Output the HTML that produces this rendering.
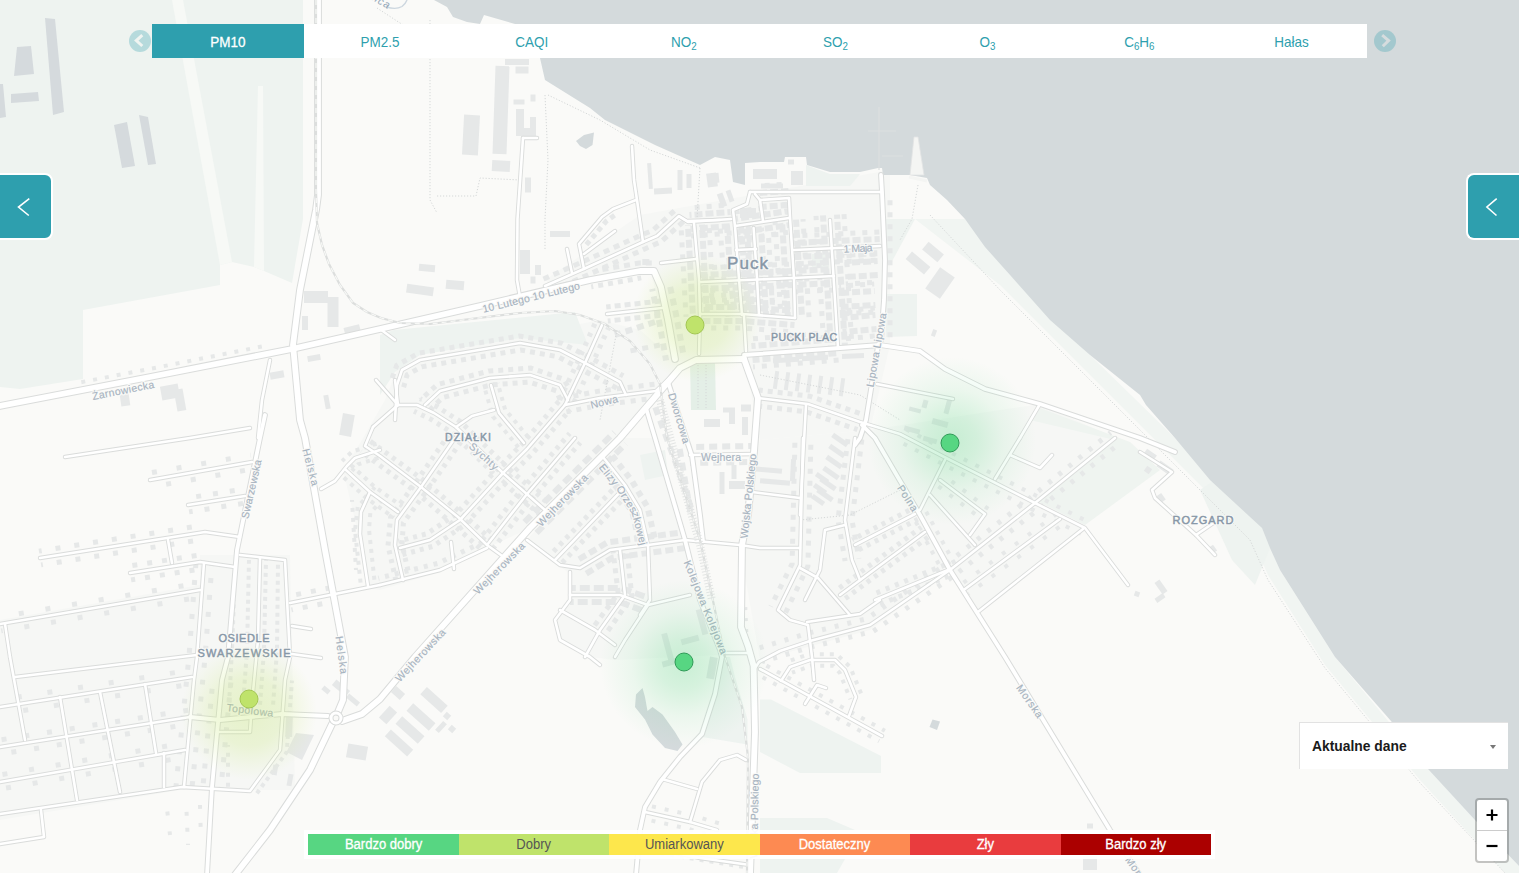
<!DOCTYPE html>
<html lang="pl"><head><meta charset="utf-8"><title>Mapa jakości powietrza - Puck</title>
<style>
html,body{margin:0;padding:0;background:#fff}
body{width:1519px;height:875px;overflow:hidden;position:relative;font-family:"Liberation Sans",sans-serif}
#map{position:absolute;left:0;top:0;width:1519px;height:873px;overflow:hidden;background:#fafaf8}
.tabs{position:absolute;left:152px;top:24px;width:1215px;height:34px;background:#fff;display:flex}
.tab{flex:1 1 0;height:34px;line-height:34px;text-align:center;color:#2e9fae;font-size:14.5px}
.tab span{display:inline-block;transform:scaleX(.93);position:relative;top:.5px}
.tab.on{background:#2e9fae;color:#fff;-webkit-text-stroke:.3px #fff}
.tab sub{font-size:10.5px;vertical-align:baseline;position:relative;top:3px;line-height:0}
.arr{position:absolute;top:30.1px;width:22px;height:22px;border-radius:50%;background:rgba(46,159,174,.29)}
.side{position:absolute;top:173px;width:51px;height:63px;background:#2e9fae;border:2px solid #fff}
.side.l{left:-2px;border-radius:0 8px 8px 0}
.side.r{left:1466px;border-radius:8px 0 0 8px;width:53px;border-right:none}
.legend{position:absolute;left:308px;top:834px;width:903px;height:21px;display:flex;box-shadow:0 0 0 4px rgba(255,255,255,.92)}
.legend div{flex:1 1 0;text-align:center;font-size:14px;line-height:21px;height:21px}
.legend span{display:inline-block;transform:scaleX(.93)}
.sel{position:absolute;left:1299px;top:722px;width:208px;height:46px;background:#fff;border-left:1px solid #e2e2e2;border-top:1px solid #e2e2e2}
.sel b{position:absolute;left:12px;top:0;line-height:47px;font-size:14.5px;color:#1a1a1a;transform:scaleX(.955);transform-origin:left center;white-space:nowrap}
.sel i{position:absolute;left:190px;top:22px;width:0;height:0;border-left:3.5px solid transparent;border-right:3.5px solid transparent;border-top:4px solid #777}
.zoom{position:absolute;left:1475px;top:798px;width:30px;height:61px;border:2px solid rgba(0,0,0,.22);border-radius:4px;background:#fff;background-clip:padding-box}
.zoom div{height:30px;position:relative}
.zoom div+div{border-top:1px solid #ccc}
</style></head><body>
<div id="map">
<svg width="1519" height="873" viewBox="0 0 1519 873" style="display:block">
<defs>
<radialGradient id="hg"><stop offset="0" stop-color="#57d682" stop-opacity=".3"/><stop offset=".3" stop-color="#57d682" stop-opacity=".22"/><stop offset=".62" stop-color="#57d682" stop-opacity=".09"/><stop offset="1" stop-color="#57d682" stop-opacity="0"/></radialGradient>
<radialGradient id="hy"><stop offset="0" stop-color="#c3e56e" stop-opacity=".32"/><stop offset=".5" stop-color="#c6e774" stop-opacity=".25"/><stop offset=".8" stop-color="#cbe97e" stop-opacity=".1"/><stop offset="1" stop-color="#d0ec8a" stop-opacity="0"/></radialGradient>
<path id="eo" d="M599,462 L621,489 L636,513 L644,545 L646,580"/>
</defs>
<rect width="1519" height="873" fill="#fafaf8"/>
<path d="M385,400 L400,362 L520,336 L600,320 L640,330 L680,365 L620,438 L530,528 L487,548 L440,572 L380,590 L368,588 L355,520 L343,470 L362,440Z" fill="#f6f7f5"/>
<path d="M640,215 L890,170 L890,345 L870,430 L760,440 L745,360 L675,362 L650,270 L560,290 L545,280Z" fill="#f6f7f5"/>
<path d="M760,440 L870,430 L1040,404 L1115,438 L1035,503 L1085,528 L978,612 L950,570 L870,630 L760,660 L740,548Z" fill="#f6f7f5"/>
<path d="M527,540 L620,438 L655,438 L700,600 L720,655 L615,660 L590,657 L560,640 L553,620 L568,600 L568,572 L558,565Z" fill="#f6f7f5"/>
<path d="M200,555 L290,555 L295,790 L180,790 L0,820 L0,620 L200,585Z" fill="#f6f7f5"/>
<path d="M0,0 L303,0 L303,219 L292,283 L264,271 L254,267 L232,262 L220,265 L220,285 L83,310 L83,379 L20,389 L0,387Z" fill="#eef3f0"/>
<path d="M722.5,657 L712.5,707 L702.5,737 L747.5,744.5 L747.5,719.5 L735,677 L730,657Z" fill="#eef3f0"/>
<path d="M760,699.5 L771,699.5 L881,756 L881,773 L800,773 L760,752Z" fill="#eef3f0"/>
<path d="M760,859 L845,859 L837,873 L760,873Z" fill="#eef3f0"/>
<path d="M827,818 L855,830 L760,830 L760,818Z" fill="#eef3f0"/>
<path d="M172,0 L183,0 L232,262 L220,265Z" fill="#f7f9f6"/>
<path d="M258,86 L263,86 L264,271 L254,267Z" fill="#f7f9f6"/>
<path d="M690,362 L715,361 L716,410 L691,410Z" fill="#e4efe7"/>
<path d="M886,294 L917,294 L917,336 L886,337Z" fill="#eef3f0"/>
<path d="M885,219 L915,219 L890,265 L885,262Z" fill="#eef3f0"/>
<path d="M812,254 L829,254 L829,268 L812,268Z" fill="#edf2ee"/>
<path d="M394,330 L575,312 L588,345 L520,338 L420,355 L395,372 L380,395 L380,335Z" fill="#eef3f0"/>
<path d="M640,455 L665,450 L668,475 L645,480Z" fill="#eef3f0"/>
<path d="M1040,408 L1130,442 L1160,470 L1085,525 L1035,500 L1115,440 L1030,420Z" fill="#eff4f0"/>
<path d="M806,165 L830,174 L860,174 L850,186 L806,186Z" fill="#eef3f0"/>
<path d="M915,219 L965,219 L1010,275 L1090,355 L1175,438 L1262,528 L1280,570 L1335,657 L1428,769 L1519,866 L1519,873 L1505,873 L1420,780 L1325,665 L1268,575 L1250,535 L1165,450 L1080,365 L1000,285Z" fill="#f1f5f2"/>
<path d="M1200,490 L1215,480 L1262,528 L1270,548 L1255,585 L1232,560Z" fill="#eef3f0"/>
<path d="M434,0 L447,7 L453,17 L467,22 L480,24 L484,15 L515,24 L540,58 L545,80 L590,108 L605,120 L655,145 L700,165 L715,157 L730,160 L733,182 L745,185 L745,163 L760,162 L784,162 L785,157 L806,157 L807,165 L830,172 L860,172 L878,168 L882,168 L883,175 L910,175 L927,178 L930,185 L947,200 L965,219 L985,247 L1010,275 L1050,320 L1090,355 L1140,395 L1146,405 L1175,438 L1210,480 L1262,528 L1270,548 L1280,570 L1335,657 L1391,721 L1428,769 L1475,820 L1519,866 L1519,0Z" fill="#d4dadc"/>
<path d="M576,141 L584,135 L594,132.5 L592.5,145 L586,149 L580,146Z" fill="#d4dadc"/>
<path d="M642.5,688 L645,697 L647.5,711 L652.5,707 L662.5,714.5 L675,732 L682.5,744.5 L677.5,751 L665,748 L652.5,734.5 L645,719.5 L635,707 L636,694.5Z" fill="#d4dadc"/>
<path d="M932.5,719.5 L940,721.5 L937,730 L929.5,727Z" fill="#d4dadc"/>
<path d="M386.5,7 Q396,10 402,6.5 Q406,3 407,0" fill="none" stroke="#cdd7df" stroke-width="1.4"/>
<text x="387.5" y="9" font-family="Liberation Sans, sans-serif" font-style="italic" font-size="10.5" fill="#8fa3b5" text-anchor="end" textLength="44" lengthAdjust="spacing" transform="rotate(30 387.5 9)">Płutnica</text>
<path d="M914,137 L918,137 L924,175 L910,175Z" fill="#f4f5f3" stroke="#e3e5e4" stroke-width=".8"/>
<path d="M909,177 L927,181" stroke="#f4f5f3" stroke-width="3"/>
<path d="M879,107 V170 M868,131 H896 M882,156 H903" stroke="#dcdfe0" stroke-width="1.2" fill="none"/>
<path d="M45,18 L55,19 L64,112 L53,115Z" fill="#d5dadd"/>
<path d="M17,47 L31,46 L34,74 L14,76Z" fill="#d5dadd"/>
<path d="M11,94 L38,92 L39,101 L11,103Z" fill="#d5dadd"/>
<path d="M0,84 L3,84 L6,117 L0,118Z" fill="#d5dadd"/>
<path d="M114,125 L127,122 L135,166 L122,168Z" fill="#d5dadd"/>
<path d="M139,115 L148,117 L156,164 L148,165Z" fill="#d5dadd"/>
<g fill="#e6e8e8"><path d="M495.5,65.8 L509.5,66.3 L506.5,154.2 L492.5,153.7Z"/><path d="M505,59 L529,59 L529,65 L505,65Z"/><path d="M515.5,66.5 L528.5,66.5 L528.5,73.5 L515.5,73.5Z"/><path d="M464.1,114.6 L480,115.4 L477.9,155.4 L462,154.6Z"/><path d="M513.5,99.5 L524.5,99.5 L524.5,104.5 L513.5,104.5Z"/><path d="M530.5,94.5 L535.5,94.5 L535.5,101.5 L530.5,101.5Z"/><path d="M516,109 L524,109 L524,135 L516,135Z"/><path d="M530,117 L536,117 L536,139 L530,139Z"/><path d="M516,128 L536,128 L536,136 L516,136Z"/><path d="M492.3,160 L510.3,161 L509.7,172 L491.7,171Z"/><path d="M525,177.5 L531,177.5 L531,192.5 L525,192.5Z"/><path d="M647.1,163.2 L651.1,162.9 L652.9,188.8 L648.9,189.1Z"/><path d="M677.5,170 L682.5,170 L682.5,190 L677.5,190Z"/><path d="M686.5,174 L691.5,174 L691.5,188 L686.5,188Z"/><path d="M653.9,188.5 L671.8,187.5 L672.1,193.5 L654.2,194.5Z"/><path d="M706.1,173.8 L716,172.4 L717.9,186.2 L708,187.6Z"/><path d="M304,291 L328,291 L328,303 L304,303Z"/><path d="M327.5,297 L338.5,297 L338.5,327 L327.5,327Z"/><path d="M302,316 L308,316 L308,330 L302,330Z"/><path d="M343.5,328 L359,324.2 L360.5,330 L345,333.8Z"/><path d="M307.1,356.2 L319.9,353.9 L320.9,359.8 L308.1,362.1Z"/><path d="M323.3,395.5 L328.2,394.7 L330.7,408.5 L325.8,409.3Z"/><path d="M343,413.1 L354.8,415.2 L351,436.9 L339.2,434.8Z"/><path d="M269.5,372.8 L283.3,370.3 L284.5,377.2 L270.7,379.7Z"/><path d="M119.7,394.7 L128.6,393.4 L130.3,405.3 L121.4,406.6Z"/><path d="M159.9,386.7 L177.6,383.5 L180.1,397.3 L162.4,400.5Z"/><path d="M173.7,389.9 L182.5,388.4 L186.3,410.1 L177.5,411.6Z"/><path d="M550,231 L570,231 L570,237 L550,237Z"/><path d="M520,250 L530,250 L530,274 L520,274Z"/><path d="M419.3,263.8 L435.3,265.2 L434.7,272.2 L418.7,270.8Z"/><path d="M407.3,283.7 L434,287.4 L432.7,296.3 L406,292.6Z"/><path d="M446.4,279.7 L464.4,281.3 L463.6,290.3 L445.6,288.7Z"/><path d="M535,265 L541,265 L541,275 L535,275Z"/><path d="M530.5,276.5 L535.5,276.5 L535.5,283.5 L530.5,283.5Z"/><path d="M426.9,686.9 L447.7,705.7 L441.1,713.1 L420.3,694.3Z"/><path d="M413.2,703.2 L435.5,723.3 L428.8,730.8 L406.5,710.7Z"/><path d="M402.2,716.2 L424.5,736.3 L417.8,743.8 L395.5,723.7Z"/><path d="M390.9,729.6 L413.2,749.7 L407.1,756.4 L384.8,736.3Z"/><path d="M389.6,705.7 L397.1,712.4 L386.4,724.3 L378.9,717.6Z"/><path d="M396.2,686 L405.1,694 L399.8,700 L390.9,692Z"/><path d="M446.8,711.8 L451.2,715.8 L447.2,720.2 L442.8,716.2Z"/><path d="M451.8,724.8 L456.2,728.8 L452.2,733.2 L447.8,729.2Z"/><path d="M443.2,720.9 L446.9,724.2 L438.8,733.1 L435.1,729.8Z"/><path d="M324.5,685.5 L330.7,690.7 L327.5,694.5 L321.3,689.3Z"/><path d="M336.4,679.5 L350.1,691.1 L345.6,696.5 L331.9,684.9Z"/><path d="M348.4,743.4 L368.1,746.8 L365.6,760.6 L345.9,757.2Z"/><path d="M296,733 L314,735 L302,760 L286.5,752Z"/><path d="M285.9,716.9 L292.8,717.1 L292.1,737.1 L285.2,736.9Z"/><path d="M349.2,693.6 L360,702.6 L356.8,706.4 L346,697.4Z"/><path d="M288.6,773.7 L293.5,774.5 L291.4,786.3 L286.5,785.5Z"/><path d="M273.4,764.6 L278.3,765.5 L276.6,775.4 L271.7,774.5Z"/><path d="M1087,823.5 L1093,823.5 L1093,828.5 L1087,828.5Z"/><path d="M1083,856 L1097,856 L1097,870 L1083,870Z"/><path d="M928.6,241.7 L943.9,254.6 L937.4,262.3 L922.1,249.4Z"/><path d="M912,251.5 L930.4,266.9 L924,274.5 L905.6,259.1Z"/><path d="M940.1,267.2 L954.8,277.5 L939.9,298.8 L925.2,288.5Z"/><path d="M933.3,329 L937.1,330.4 L934.7,337 L930.9,335.6Z"/><path d="M1154.5,583 L1159.4,579.5 L1167.5,591 L1162.6,594.5Z"/><path d="M1154.5,598.8 L1162.7,593.1 L1165.5,597.2 L1157.3,602.9Z"/><path d="M1135.5,590.8 L1140.2,592.5 L1138.5,597.2 L1133.8,595.5Z"/><path d="M1147.1,448.7 L1156.9,455.6 L1152.9,461.3 L1143.1,454.4Z"/><path d="M1160.5,460.5 L1173.6,469.7 L1169.5,475.5 L1156.4,466.3Z"/><path d="M1147.3,465.8 L1152.2,469.3 L1148.7,474.2 L1143.8,470.7Z"/><path d="M1156.2,496.4 L1161.2,493 L1165.8,499.6 L1160.8,503Z"/><path d="M1208.9,547.6 L1213,544.7 L1217.1,550.4 L1213,553.3Z"/><path d="M1092,650 L1092,650 L1092,650 L1092,650Z"/><path d="M753,169 L777,169 L777,179 L753,179Z"/><path d="M788,159.5 L794,159.5 L794,164.5 L788,164.5Z"/><path d="M791,171 L803,171 L803,185 L791,185Z"/><path d="M761,183.5 L783,183.5 L783,188.5 L761,188.5Z"/><path d="M710.6,173.4 L718.5,172.7 L719.4,182.6 L711.5,183.3Z"/><path d="M716.8,194.4 L722.4,192.4 L727.2,205.6 L721.6,207.6Z"/><path d="M725.6,191.2 L730.3,189.5 L734.4,200.8 L729.7,202.5Z"/><path d="M740,208 L756,208 L756,218 L740,218Z"/><path d="M909.7,406.5 L921.3,409.6 L920.3,413.5 L908.7,410.4Z"/><path d="M923.6,399.5 L928.5,400.8 L926.4,408.5 L921.5,407.2Z"/><path d="M943.5,413.1 L947.7,397.6 L952.5,398.9 L948.3,414.4Z"/><path d="M933,418 L948.5,422.2 L947,428 L931.5,423.8Z"/><path d="M923.9,435.8 L937.4,439.4 L936.1,444.2 L922.6,440.6Z"/><path d="M904.9,425.5 L920.4,429.7 L919.1,434.5 L903.6,430.3Z"/><path d="M680.5,639.4 L697.9,634.8 L699.5,640.6 L682.1,645.2Z"/><path d="M695.7,610.2 L701.5,608.7 L708.3,633.8 L702.5,635.3Z"/><path d="M661.2,634.3 L667,632.7 L674.8,661.7 L669,663.3Z"/><path d="M661.6,661.7 L680.9,656.5 L682.4,662.3 L663.1,667.5Z"/><path d="M710,656.5 L717.8,657.9 L714,679.5 L706.2,678.1Z"/><path d="M754.3,466.3 L782.2,468.7 L781.7,473.7 L753.8,471.3Z"/><path d="M760.3,478.2 L790.2,480.8 L789.7,485.8 L759.8,483.2Z"/><path d="M791.1,458.9 L796.1,459.1 L794.9,481.1 L789.9,480.9Z"/><path d="M729,412 L735,412 L735,424 L729,424Z"/><path d="M742,417 L748,417 L748,435 L742,435Z"/><path d="M729,481 L745,481 L745,489 L729,489Z"/><path d="M719.5,472 L724.5,472 L724.5,494 L719.5,494Z"/><path d="M731.5,465 L736.5,465 L736.5,479 L731.5,479Z"/><path d="M704,419 L720,419 L720,427 L704,427Z"/><path d="M723,407.5 L735,407.5 L735,412.5 L723,412.5Z"/><path d="M741,404.5 L751,404.5 L751,411.5 L741,411.5Z"/><path d="M772.9,358.2 L798.9,356.8 L799.1,361.8 L773.1,363.2Z"/><path d="M801.9,356.2 L827.9,354.8 L828.1,359.8 L802.1,361.2Z"/><path d="M841.9,354.1 L863.9,352.9 L864.1,357.9 L842.1,359.1Z"/><path d="M775.3,370.8 L779.2,371.4 L776.7,389.2 L772.8,388.6Z"/><path d="M786.3,372 L790.2,372.6 L787.7,390.4 L783.8,389.8Z"/><path d="M797.3,373.2 L801.2,373.8 L798.7,391.6 L794.8,391Z"/><path d="M808.3,374.4 L812.2,375 L809.7,392.8 L805.8,392.2Z"/><path d="M819.3,375.6 L823.2,376.2 L820.7,394 L816.8,393.4Z"/><path d="M830.3,376.8 L834.2,377.4 L831.7,395.2 L827.8,394.6Z"/><path d="M841.3,378 L845.2,378.6 L842.7,396.4 L838.8,395.8Z"/><path d="M834.1,432.8 L848.8,443.1 L845.9,447.2 L831.2,436.9Z"/><path d="M831.1,443.8 L845.8,454.1 L842.9,458.2 L828.2,447.9Z"/><path d="M828.1,454.8 L842.8,465.1 L839.9,469.2 L825.2,458.9Z"/><path d="M825.1,465.8 L839.8,476.1 L836.9,480.2 L822.2,469.9Z"/><path d="M822.1,476.8 L836.8,487.1 L833.9,491.2 L819.2,480.9Z"/><path d="M819.1,487.8 L833.8,498.1 L830.9,502.2 L816.2,491.9Z"/><path d="M817.7,471.9 L829.2,480 L826.3,484.1 L814.8,476Z"/><path d="M815.7,482.9 L827.2,491 L824.3,495.1 L812.8,487Z"/><path d="M813.7,493.9 L825.2,502 L822.3,506.1 L810.8,498Z"/></g>
<g fill="none" stroke="#e6e8e8"><path d="M607.8,321 L662.8,315" stroke-width="5" stroke-dasharray="6 4" stroke-dashoffset="3.2"/><path d="M606.2,307 L661.2,301" stroke-width="5" stroke-dasharray="6 4" stroke-dashoffset="1.5"/><path d="M598.6,270.1 L639,263.1 L654,263" stroke-width="5" stroke-dasharray="6 5" stroke-dashoffset="7.2"/><path d="M615,335 L655,322" stroke-width="6" stroke-dasharray="7 5" stroke-dashoffset="0.9"/><path d="M625,352 L660,345" stroke-width="5" stroke-dasharray="6 6" stroke-dashoffset="6.4"/><path d="M652.2,288.9 L659.2,321.7 L666.1,360.6" stroke-width="6" stroke-dasharray="7 5" stroke-dashoffset="4.4"/><path d="M403.6,387.2 L407.2,374.7 L421.6,366.8 L520.5,350 L557.9,356.7 L581.7,369.2 L616.7,388.2" stroke-width="5" stroke-dasharray="5 5" stroke-dashoffset="0.6"/><path d="M390.4,382.8 L396.8,365.3 L418.4,353.2 L519.5,336 L562.1,343.3 L588.3,356.8 L623.3,375.8" stroke-width="5" stroke-dasharray="5 5" stroke-dashoffset="5.1"/><path d="M429.8,410.1 L442.7,397.5 L491.2,384.9 L529.3,382 L556.2,390.8 L561.8,403.3" stroke-width="5" stroke-dasharray="5 5" stroke-dashoffset="0.4"/><path d="M420.2,399.9 L437.3,384.5 L488.8,371.1 L530.7,368 L563.8,379.2 L574.2,396.7" stroke-width="5" stroke-dasharray="5 5" stroke-dashoffset="4.3"/><path d="M566.4,411.9 L601.1,404.9 L656.9,397.9" stroke-width="5" stroke-dasharray="5 6" stroke-dashoffset="0.8"/><path d="M563.6,398.1 L598.9,391.1 L655.1,384.1" stroke-width="5" stroke-dasharray="5 6" stroke-dashoffset="1.0"/><path d="M360.9,451.6 L416.6,492.4 L482.4,550.3" stroke-width="5" stroke-dasharray="4 5" stroke-dashoffset="3.8"/><path d="M369.1,440.4 L425.4,481.6 L491.6,539.7" stroke-width="5" stroke-dasharray="4 5" stroke-dashoffset="7.4"/><path d="M414,411.3 L430.6,419.1 L451.4,432.3 L498.2,478.1 L540.4,515.3" stroke-width="5" stroke-dasharray="4 5" stroke-dashoffset="1.1"/><path d="M420,398.7 L437.4,406.9 L460.6,421.7 L507.8,467.9 L549.6,504.7" stroke-width="5" stroke-dasharray="4 5" stroke-dashoffset="2.0"/><path d="M341.3,475.2 L365.6,497.4 L393.9,517.7" stroke-width="4" stroke-dasharray="4 5" stroke-dashoffset="5.6"/><path d="M350.7,464.8 L374.4,486.6 L402.1,506.3" stroke-width="4" stroke-dasharray="4 5" stroke-dashoffset="8.5"/><path d="M484.3,386.9 L492.9,416.5 L518.6,447.5" stroke-width="4" stroke-dasharray="4 5" stroke-dashoffset="5.2"/><path d="M497.7,383.1 L505.1,409.5 L529.4,438.5" stroke-width="4" stroke-dasharray="4 5" stroke-dashoffset="3.6"/><path d="M449.2,434 L415.3,483 L390.6,517.1 L388,545.7 L396.2,581.6" stroke-width="5" stroke-dasharray="4 5" stroke-dashoffset="8.8"/><path d="M460.8,442 L426.7,491 L403.4,522.9 L402,544.3 L409.8,578.4" stroke-width="5" stroke-dasharray="4 5" stroke-dashoffset="0.4"/><path d="M559.7,400.4 L521.8,444.3 L497.9,468.2 L455.3,514.8 L427,533.7 L398.2,541.2" stroke-width="5" stroke-dasharray="4 5" stroke-dashoffset="7.7"/><path d="M570.3,409.6 L532.2,453.7 L508.1,477.8 L464.7,525.2 L433,546.3 L401.8,554.8" stroke-width="5" stroke-dasharray="4 5" stroke-dashoffset="2.6"/><path d="M569.7,433.4 L521.6,489.6 L481.5,540.7" stroke-width="5" stroke-dasharray="4 5" stroke-dashoffset="1.3"/><path d="M580.3,442.6 L532.4,498.4 L492.5,549.3" stroke-width="5" stroke-dasharray="4 5" stroke-dashoffset="1.1"/><path d="M378.3,578.2 L437.7,563.4 L484,541.7" stroke-width="5" stroke-dasharray="4 6" stroke-dashoffset="3.1"/><path d="M595.6,322.1 L578.6,360.1 L558.7,402" stroke-width="5" stroke-dasharray="4 6" stroke-dashoffset="8.2"/><path d="M608.4,327.9 L591.4,365.9 L571.3,408" stroke-width="5" stroke-dasharray="4 6" stroke-dashoffset="1.8"/><path d="M614.3,432.3 L524.3,522.3" stroke-width="6" stroke-dasharray="9 5" stroke-dashoffset="8.1"/><path d="M625.7,443.7 L535.7,533.7" stroke-width="6" stroke-dasharray="9 5" stroke-dashoffset="8.9"/><path d="M375,585.3 L369,529.6 L370.3,513 L385.2,496.7" stroke-width="4" stroke-dasharray="4 5" stroke-dashoffset="3.4"/><path d="M361,586.7 L355,530.4 L357.7,507 L374.8,487.3" stroke-width="4" stroke-dasharray="4 5" stroke-dashoffset="4.9"/><path d="M351.9,470.9 L358.1,464.3 L382.1,456.7" stroke-width="4" stroke-dasharray="4 5" stroke-dashoffset="0.6"/><path d="M342.1,461.1 L351.9,451.7 L377.9,443.3" stroke-width="4" stroke-dasharray="4 5" stroke-dashoffset="0.5"/><path d="M352,500 L356,570" stroke-width="4" stroke-dasharray="4 6" stroke-dashoffset="2.1"/><path d="M560.1,564.8 L630.1,491.8" stroke-width="5" stroke-dasharray="4 5" stroke-dashoffset="6.1"/><path d="M549.9,555.2 L619.9,482.2" stroke-width="5" stroke-dasharray="4 5" stroke-dashoffset="3.8"/><path d="M596.7,461.9 L618.4,489.6 L632.5,512.9 L640.2,546.8" stroke-width="6" stroke-dasharray="6 5" stroke-dashoffset="3.5"/><path d="M609.3,452.1 L631.6,480.4 L647.5,507.1 L655.8,543.2" stroke-width="6" stroke-dasharray="6 5" stroke-dashoffset="6.4"/><path d="M570,602 L619.1,601.9 L645.6,611.6" stroke-width="6" stroke-dasharray="10 4" stroke-dashoffset="6.3"/><path d="M570,588 L620.9,588.1 L650.4,598.4" stroke-width="6" stroke-dasharray="10 4" stroke-dashoffset="4.2"/><path d="M584.1,574.9 L612.6,557.6 L649.1,552.9 L686.1,547.9" stroke-width="6" stroke-dasharray="8 4" stroke-dashoffset="9.5"/><path d="M575.9,561.1 L607.4,542.4 L646.9,537.1 L683.9,532.1" stroke-width="6" stroke-dasharray="8 4" stroke-dashoffset="8.4"/><path d="M613,550.8 L618.2,593.3 L594.3,625.9" stroke-width="5" stroke-dasharray="5 5" stroke-dashoffset="2.4"/><path d="M627,549.2 L631.8,596.7 L605.7,634.1" stroke-width="5" stroke-dasharray="5 5" stroke-dashoffset="5.7"/><path d="M547.8,292.4 L588.9,274.4 L645.9,248.4 L661.1,241.7 L683.7,221.2" stroke-width="5" stroke-dasharray="6 5" stroke-dashoffset="5.8"/><path d="M542.2,279.6 L583.1,261.6 L640.1,235.6 L652.9,230.3 L674.3,210.8" stroke-width="5" stroke-dasharray="6 5" stroke-dashoffset="9.6"/><path d="M616.5,213.9 L606.3,221.2 L583.6,247.9" stroke-width="5" stroke-dasharray="5 4" stroke-dashoffset="6.6"/><path d="M591.2,286.9 L641.2,277.9" stroke-width="5" stroke-dasharray="5 5" stroke-dashoffset="2.9"/><path d="M757,405.9 L806.2,411.8 L857.4,429.6" stroke-width="5" stroke-dasharray="5 5" stroke-dashoffset="9.8"/><path d="M759,390.1 L809.8,396.2 L862.6,414.4" stroke-width="5" stroke-dasharray="5 5" stroke-dashoffset="1.2"/><path d="M896.8,440.2 L946.8,466.2 L1031.9,509.3 L1081.9,534.3" stroke-width="4" stroke-dasharray="4 9" stroke-dashoffset="5.4"/><path d="M903.2,427.8 L953.2,453.8 L1038.1,496.7 L1088.1,521.7" stroke-width="4" stroke-dasharray="4 9" stroke-dashoffset="9.8"/><path d="M1110.6,432.6 L1030.6,497.5 L945.8,564.4 L866.9,618.7 L808.2,633.2 L758,648.3" stroke-width="5" stroke-dasharray="4 9" stroke-dashoffset="2.0"/><path d="M1119.4,443.4 L1039.4,508.5 L954.2,575.6 L873.1,631.3 L811.8,646.8 L762,661.7" stroke-width="5" stroke-dasharray="4 9" stroke-dashoffset="6.4"/><path d="M1056.4,514.2 L961.4,584.2" stroke-width="4" stroke-dasharray="4 12" stroke-dashoffset="0.6"/><path d="M1063.6,523.8 L968.6,593.8" stroke-width="4" stroke-dasharray="4 12" stroke-dashoffset="10.7"/><path d="M843.6,599.8 L928.6,536.8" stroke-width="5" stroke-dasharray="4 5" stroke-dashoffset="6.9"/><path d="M836.4,590.2 L921.4,527.2" stroke-width="5" stroke-dasharray="4 5" stroke-dashoffset="5.2"/><path d="M857.8,550.3 L917.8,519.3" stroke-width="5" stroke-dasharray="4 5" stroke-dashoffset="7.9"/><path d="M852.2,539.7 L912.2,508.7" stroke-width="5" stroke-dasharray="4 5" stroke-dashoffset="2.8"/><path d="M877.3,605.5 L950.3,575.5" stroke-width="5" stroke-dasharray="4 6" stroke-dashoffset="7.0"/><path d="M872.7,594.5 L945.7,564.5" stroke-width="5" stroke-dasharray="4 6" stroke-dashoffset="5.9"/><path d="M795,437.8 L792.1,563.8 L770.8,606.5" stroke-width="5" stroke-dasharray="5 7" stroke-dashoffset="7.0"/><path d="M811,438.2 L807.9,566.2 L785.2,613.5" stroke-width="5" stroke-dasharray="5 7" stroke-dashoffset="5.5"/><path d="M848.1,437.2 L838,519.8 L845.1,561.2" stroke-width="5" stroke-dasharray="5 7" stroke-dashoffset="10.1"/><path d="M861.9,438.8 L852,520.2 L858.9,558.8" stroke-width="5" stroke-dasharray="5 7" stroke-dashoffset="11.3"/><path d="M757.1,674.3 L879.1,741.3" stroke-width="4" stroke-dasharray="4 8" stroke-dashoffset="5.7"/><path d="M762.9,663.7 L884.9,730.7" stroke-width="4" stroke-dasharray="4 8" stroke-dashoffset="8.0"/><path d="M792,672.7 L810.9,665.9 L833.4,665.8 L839.8,673 L850.4,699.3" stroke-width="4" stroke-dasharray="4 6" stroke-dashoffset="0.6"/><path d="M788,661.3 L809.1,654.1 L836.6,654.2 L850.2,667 L861.6,694.7" stroke-width="4" stroke-dasharray="4 6" stroke-dashoffset="7.0"/><path d="M913.9,518.4 L943.9,573.4" stroke-width="4" stroke-dasharray="4 7" stroke-dashoffset="7.1"/><path d="M926.1,511.6 L956.1,566.6" stroke-width="4" stroke-dasharray="4 7" stroke-dashoffset="10.9"/><path d="M936.4,484.8 L981.4,518.8" stroke-width="4" stroke-dasharray="4 10" stroke-dashoffset="11.5"/><path d="M943.6,475.2 L988.6,509.2" stroke-width="4" stroke-dasharray="4 10" stroke-dashoffset="4.0"/><path d="M266,560 L264,650 L260,705" stroke-width="4" stroke-dasharray="4 4" stroke-dashoffset="3.1"/><path d="M278,562 L277,650 L273,706" stroke-width="4" stroke-dasharray="4 4" stroke-dashoffset="5.3"/><path d="M249,560 L247,650 L243,705" stroke-width="4" stroke-dasharray="4 4" stroke-dashoffset="0.2"/><path d="M234,600 L232,650 L229,705" stroke-width="4" stroke-dasharray="4 4" stroke-dashoffset="3.7"/><path d="M41.1,564.9 L206.1,538.9" stroke-width="5" stroke-dasharray="5 14" stroke-dashoffset="3.2"/><path d="M38.9,551.1 L203.9,525.1" stroke-width="5" stroke-dasharray="5 14" stroke-dashoffset="2.2"/><path d="M131.1,579.9 L201.1,568.9" stroke-width="5" stroke-dasharray="5 10" stroke-dashoffset="0.9"/><path d="M128.9,566.1 L198.9,555.1" stroke-width="5" stroke-dasharray="5 10" stroke-dashoffset="11.5"/><path d="M1.2,630.9 L201.2,596.9" stroke-width="5" stroke-dasharray="5 22" stroke-dashoffset="3.5"/><path d="M-1.2,617.1 L198.8,583.1" stroke-width="5" stroke-dasharray="5 22" stroke-dashoffset="6.7"/><path d="M151.2,486.9 L253.2,468.9" stroke-width="5" stroke-dasharray="5 20" stroke-dashoffset="9.8"/><path d="M148.8,473.1 L250.8,455.1" stroke-width="5" stroke-dasharray="5 20" stroke-dashoffset="21.8"/><path d="M189.1,511.9 L246.1,502.9" stroke-width="5" stroke-dasharray="5 12" stroke-dashoffset="1.4"/><path d="M186.9,498.1 L243.9,489.1" stroke-width="5" stroke-dasharray="5 12" stroke-dashoffset="7.6"/><path d="M1.1,753.9 L191.1,723.9" stroke-width="5" stroke-dasharray="5 18" stroke-dashoffset="12.6"/><path d="M-1.1,740.1 L188.9,710.1" stroke-width="5" stroke-dasharray="5 18" stroke-dashoffset="20.3"/><path d="M1.2,788.9 L186.2,756.9" stroke-width="5" stroke-dasharray="5 22" stroke-dashoffset="22.1"/><path d="M-1.2,775.1 L183.8,743.1" stroke-width="5" stroke-dasharray="5 22" stroke-dashoffset="23.3"/><path d="M1.1,713.9 L193.1,683.9" stroke-width="5" stroke-dasharray="5 26" stroke-dashoffset="8.6"/><path d="M-1.1,700.1 L190.9,670.1" stroke-width="5" stroke-dasharray="5 26" stroke-dashoffset="12.9"/><path d="M213,679.2 L203,786.2" stroke-width="5" stroke-dasharray="5 10" stroke-dashoffset="5.4"/><path d="M231,680.8 L221,787.8" stroke-width="5" stroke-dasharray="5 10" stroke-dashoffset="13.3"/><path d="M196,562.4 L189,656.3 L176,786.2" stroke-width="5" stroke-dasharray="5 12" stroke-dashoffset="16.3"/><path d="M212,563.6 L205,657.7 L192,787.8" stroke-width="5" stroke-dasharray="5 12" stroke-dashoffset="2.6"/><path d="M292,680.5 L286.7,752.1 L255.6,795.1" stroke-width="4" stroke-dasharray="4 4" stroke-dashoffset="1.4"/><path d="M228,745 L228,787" stroke-width="4" stroke-dasharray="4 6" stroke-dashoffset="2.3"/><path d="M291.4,609.9 L336.4,600.9" stroke-width="5" stroke-dasharray="5 10" stroke-dashoffset="3.5"/><path d="M288.6,596.1 L333.6,587.1" stroke-width="5" stroke-dasharray="5 10" stroke-dashoffset="7.3"/><path d="M76.5,383.1 L148.4,369.2 L263.4,346.2" stroke-width="4" stroke-dasharray="4 8" stroke-dashoffset="7.1"/><path d="M186,800 L188,845" stroke-width="4" stroke-dasharray="4 12" stroke-dashoffset="4.2"/><path d="M200,805 L201,840" stroke-width="4" stroke-dasharray="4 14" stroke-dashoffset="0.1"/><path d="M166,800 L170,835" stroke-width="4" stroke-dasharray="4 16" stroke-dashoffset="8.4"/><path d="M643.5,818.8 L688.3,828.8 L715,836.7" stroke-width="4" stroke-dasharray="4 9" stroke-dashoffset="4.8"/><path d="M646.5,805.2 L691.7,815.2 L719,823.3" stroke-width="4" stroke-dasharray="4 9" stroke-dashoffset="7.4"/><path d="M640,850 L750,868" stroke-width="4" stroke-dasharray="4 6" stroke-dashoffset="9.5"/><path d="M688,225.4 L693,316.4" stroke-width="6" stroke-dasharray="8 3" stroke-dashoffset="7.6"/><path d="M702,224.6 L707,315.6" stroke-width="6" stroke-dasharray="8 3" stroke-dashoffset="5.7"/><path d="M681,225.8 L686,316.8" stroke-width="5" stroke-dasharray="5 7" stroke-dashoffset="7.4"/><path d="M709,224.2 L714,315.2" stroke-width="5" stroke-dasharray="5 7" stroke-dashoffset="8.1"/><path d="M727,225.5 L731,281.6 L735,315.8" stroke-width="6" stroke-dasharray="8 3" stroke-dashoffset="0.6"/><path d="M741,224.5 L745,280.4 L749,314.2" stroke-width="6" stroke-dasharray="8 3" stroke-dashoffset="9.9"/><path d="M720,226 L724.1,282.2 L728.1,316.6" stroke-width="5" stroke-dasharray="5 7" stroke-dashoffset="9.4"/><path d="M748,224 L751.9,279.8 L755.9,313.4" stroke-width="5" stroke-dasharray="5 7" stroke-dashoffset="10.5"/><path d="M747,228.4 L752,315.4" stroke-width="6" stroke-dasharray="8 3" stroke-dashoffset="8.8"/><path d="M761,227.6 L766,314.6" stroke-width="6" stroke-dasharray="8 3" stroke-dashoffset="4.3"/><path d="M740,228.8 L745,315.8" stroke-width="5" stroke-dasharray="5 7" stroke-dashoffset="4.8"/><path d="M768,227.2 L773,314.2" stroke-width="5" stroke-dasharray="5 7" stroke-dashoffset="1.2"/><path d="M782,220.4 L788,318.4" stroke-width="6" stroke-dasharray="8 3" stroke-dashoffset="7.0"/><path d="M796,219.6 L802,317.6" stroke-width="6" stroke-dasharray="8 3" stroke-dashoffset="0.7"/><path d="M775,220.9 L781,318.9" stroke-width="5" stroke-dasharray="5 7" stroke-dashoffset="0.8"/><path d="M803,219.1 L809,317.1" stroke-width="5" stroke-dasharray="5 7" stroke-dashoffset="2.5"/><path d="M823,215.4 L831,348.4" stroke-width="6" stroke-dasharray="8 3" stroke-dashoffset="1.8"/><path d="M837,214.6 L845,347.6" stroke-width="6" stroke-dasharray="8 3" stroke-dashoffset="3.7"/><path d="M816,215.8 L824,348.8" stroke-width="5" stroke-dasharray="5 7" stroke-dashoffset="0.6"/><path d="M844,214.2 L852,347.2" stroke-width="5" stroke-dasharray="5 7" stroke-dashoffset="0.0"/><path d="M701.3,289 L793.3,285 L834.3,283" stroke-width="6" stroke-dasharray="8 3" stroke-dashoffset="1.7"/><path d="M700.7,275 L792.7,271 L833.7,269" stroke-width="6" stroke-dasharray="8 3" stroke-dashoffset="1.1"/><path d="M701.6,296 L793.6,292 L834.7,290" stroke-width="5" stroke-dasharray="5 7" stroke-dashoffset="4.4"/><path d="M700.4,268 L792.4,264 L833.3,262" stroke-width="5" stroke-dasharray="5 7" stroke-dashoffset="0.3"/><path d="M701,321 L741.7,321 L794.5,325" stroke-width="6" stroke-dasharray="8 3" stroke-dashoffset="9.6"/><path d="M701,307 L742.3,307 L795.5,311" stroke-width="6" stroke-dasharray="8 3" stroke-dashoffset="6.8"/><path d="M701,328 L741.4,328 L793.9,332" stroke-width="5" stroke-dasharray="5 7" stroke-dashoffset="1.8"/><path d="M701,300 L742.6,300 L796.1,304" stroke-width="5" stroke-dasharray="5 7" stroke-dashoffset="3.0"/><path d="M736,232.9 L790,224.9" stroke-width="6" stroke-dasharray="8 3" stroke-dashoffset="3.8"/><path d="M734,219.1 L788,211.1" stroke-width="6" stroke-dasharray="8 3" stroke-dashoffset="4.0"/><path d="M737.1,239.8 L791.1,231.8" stroke-width="5" stroke-dasharray="5 7" stroke-dashoffset="1.5"/><path d="M732.9,212.2 L786.9,204.2" stroke-width="5" stroke-dasharray="5 7" stroke-dashoffset="10.2"/><path d="M792.3,257 L880.3,253" stroke-width="6" stroke-dasharray="8 3" stroke-dashoffset="10.9"/><path d="M791.7,243 L879.7,239" stroke-width="6" stroke-dasharray="8 3" stroke-dashoffset="5.1"/><path d="M792.6,264 L880.6,260" stroke-width="5" stroke-dasharray="5 7" stroke-dashoffset="5.8"/><path d="M791.4,236 L879.4,232" stroke-width="5" stroke-dasharray="5 7" stroke-dashoffset="1.0"/><path d="M752.6,360 L838.6,353" stroke-width="6" stroke-dasharray="8 3" stroke-dashoffset="1.1"/><path d="M751.4,346 L837.4,339" stroke-width="6" stroke-dasharray="8 3" stroke-dashoffset="3.8"/><path d="M753.1,367 L839.1,360" stroke-width="5" stroke-dasharray="5 7" stroke-dashoffset="3.2"/><path d="M750.9,339 L836.9,332" stroke-width="5" stroke-dasharray="5 7" stroke-dashoffset="9.9"/><path d="M760.5,207 L789.5,205" stroke-width="6" stroke-dasharray="8 3" stroke-dashoffset="1.8"/><path d="M759.5,193 L788.5,191" stroke-width="6" stroke-dasharray="8 3" stroke-dashoffset="0.3"/><path d="M761,214 L790,212" stroke-width="5" stroke-dasharray="5 7" stroke-dashoffset="11.4"/><path d="M759,186 L788,184" stroke-width="5" stroke-dasharray="5 7" stroke-dashoffset="6.3"/><path d="M690.5,229 L731.5,226" stroke-width="6" stroke-dasharray="8 3" stroke-dashoffset="1.6"/><path d="M689.5,215 L730.5,212" stroke-width="6" stroke-dasharray="8 3" stroke-dashoffset="6.0"/><path d="M691,236 L732,233" stroke-width="5" stroke-dasharray="5 7" stroke-dashoffset="0.3"/><path d="M689,208 L730,205" stroke-width="5" stroke-dasharray="5 7" stroke-dashoffset="6.3"/><path d="M840.4,307 L875.4,305" stroke-width="6" stroke-dasharray="8 3" stroke-dashoffset="10.8"/><path d="M839.6,293 L874.6,291" stroke-width="6" stroke-dasharray="8 3" stroke-dashoffset="9.5"/><path d="M840.8,314 L875.8,312" stroke-width="5" stroke-dasharray="5 7" stroke-dashoffset="8.4"/><path d="M839.2,286 L874.2,284" stroke-width="5" stroke-dasharray="5 7" stroke-dashoffset="3.1"/><path d="M842.6,332 L876.6,329" stroke-width="6" stroke-dasharray="8 3" stroke-dashoffset="4.0"/><path d="M841.4,318 L875.4,315" stroke-width="6" stroke-dasharray="8 3" stroke-dashoffset="1.8"/><path d="M843.2,338.9 L877.2,335.9" stroke-width="5" stroke-dasharray="5 7" stroke-dashoffset="9.3"/><path d="M840.8,311.1 L874.8,308.1" stroke-width="5" stroke-dasharray="5 7" stroke-dashoffset="6.4"/><path d="M845.4,277 L878.4,275" stroke-width="6" stroke-dasharray="8 3" stroke-dashoffset="8.6"/><path d="M844.6,263 L877.6,261" stroke-width="6" stroke-dasharray="8 3" stroke-dashoffset="3.6"/><path d="M845.8,284 L878.8,282" stroke-width="5" stroke-dasharray="5 7" stroke-dashoffset="2.7"/><path d="M844.2,256 L877.2,254" stroke-width="5" stroke-dasharray="5 7" stroke-dashoffset="9.7"/><path d="M890,200 L890,340" stroke-width="5" stroke-dasharray="5 7" stroke-dashoffset="11.8"/><path d="M669.8,285.1 L676.8,318.3 L683.9,357.4" stroke-width="6" stroke-dasharray="7 5" stroke-dashoffset="10.2"/><path d="M640,262 L654,262" stroke-width="6" stroke-dasharray="7 5" stroke-dashoffset="9.7"/><path d="M654.4,404.9 L676.5,465 L692.5,512.1" stroke-width="6" stroke-dasharray="8 6" stroke-dashoffset="11.5"/><path d="M679.1,445.5 L691.1,516.5" stroke-width="6" stroke-dasharray="8 6" stroke-dashoffset="10.4"/><path d="M690.1,463 L754.1,462" stroke-width="6" stroke-dasharray="8 5" stroke-dashoffset="2.9"/><path d="M689.9,447 L753.9,446" stroke-width="6" stroke-dasharray="8 5" stroke-dashoffset="6.7"/><path d="M745,600 L747,650" stroke-width="4" stroke-dasharray="3 8" stroke-dashoffset="3.9"/></g>
<g fill="none" stroke="#d5d8d8" stroke-width="1" stroke-dasharray="1.2 1.8"><path d="M430,20 L430,200 L437,213"/><path d="M377,8 L400,23 L430,40"/><path d="M437,196 L476,196 L480,178 L520,180"/><path d="M545,95 L548,160 L545,219 L545,250"/><path d="M548,95 L600,120 L650,150 L700,168"/><path d="M632,146 L632,165"/><path d="M700,168 L697,219"/><path d="M883,175 L884,219"/><path d="M918,185 L912,219 L900,240"/><path d="M930,215 L1000,290 L1080,370 L1165,455 L1250,540 L1268,580 L1325,668 L1420,783 L1505,873"/><path d="M760,375 L860,395 L900,420"/><path d="M800,520 L850,515 L900,490"/><path d="M617,330 L600,420"/><path d="M706,362 L706,410"/><path d="M698,362 L698,410"/></g>
<g stroke="#dadcdb" stroke-width="4.4" fill="none" stroke-linecap="round" stroke-linejoin="round"><path d="M545,286 L586,268 L643,242 L657,236 L679,216 L687,221 L720,220"/><path d="M636,200 L613,209 L602,217 L579,244 L584,269"/><path d="M615,231 L584,254"/><path d="M567,249 L572,273"/><path d="M523,138 L517.5,219 L517,280 L520,297"/><path d="M523,138 L537,138"/><path d="M632,146 L634,180 L637,200 L643,242"/><path d="M395,420 L397,385 L402,370 L420,360 L520,343 L560,350 L585,363 L620,382 L626,395"/><path d="M425,405 L440,391 L490,378 L530,375 L560,385 L568,400"/><path d="M602,325 L585,363 L565,405"/><path d="M565,405 L600,398 L656,391 L680,368"/><path d="M258,438 L262,400 L270,360"/><path d="M376,380 L398,405 L395,380"/><path d="M373,427 L365,446 L380,456 L421,487 L458,517 L487,545 L505,558"/><path d="M398,405 L417,405 L434,413 L456,427 L503,473 L545,510"/><path d="M398,405 L373,427"/><path d="M346,470 L370,492 L398,512"/><path d="M491,385 L499,413 L524,443"/><path d="M456,427 L472,416 L494,410"/><path d="M451,542 L454,569"/><path d="M455,438 L421,487 L397,520 L395,545 L403,580"/><path d="M565,405 L527,449 L503,473 L460,520 L430,540 L400,548"/><path d="M575,438 L527,494 L487,545"/><path d="M380,585 L440,570 L487,548"/><path d="M603,457 L625,485 L640,510 L648,545 L650,600 L640,615"/><path d="M527,540 L560,565 L580,568 L610,550 L648,545 L685,540 L740,545 L760,548 L800,548"/><path d="M555,560 L625,487"/><path d="M570,572 L570,600 L555,620 L560,640 L590,657 L600,665"/><path d="M570,595 L620,595 L648,605 L690,595"/><path d="M620,550 L625,595 L600,630 L585,657"/><path d="M560,610 L595,630 L615,645"/><path d="M648,605 L625,640 L615,657"/><path d="M690,455 L754,454"/><path d="M694,223 L699,279 L700,316 L699,354"/><path d="M750,192 L747,204 L733,210 L735,226 L739,279 L742,315"/><path d="M753.6,228 L757,278 L759,315"/><path d="M755,194 L760,200 L789,198 L790,217 L794,279 L795,318"/><path d="M830,220 L838,348"/><path d="M680,217 L688,222 L731,219"/><path d="M735,226 L789,218"/><path d="M760,200 L763,221"/><path d="M794,250 L880,246"/><path d="M661,263 L696,259"/><path d="M701,282 L793,278 L834,276"/><path d="M701,314 L742,314 L795,318"/><path d="M744,316 L746,351"/><path d="M736,250 L756,249"/><path d="M607,314 L662,308"/><path d="M750,192 L882,192"/><path d="M758,398 L808,404 L860,422 L900,434 L950,460 L1035,503 L1085,528 L1128,585"/><path d="M806,405 L800,515"/><path d="M752,492 L800,498"/><path d="M1115,438 L1035,503 L950,570 L870,625 L810,641 L780,651 L759,662 L755,668"/><path d="M807,622 L860,614 L880,600"/><path d="M724,653 L748,653"/><path d="M1060,519 L965,589"/><path d="M1083,529 L978,612"/><path d="M945,460 L920,510"/><path d="M940,480 L985,514 L970,535"/><path d="M930,495 L975,545"/><path d="M1020,438 L995,479"/><path d="M1010,455 L1040,468 L1052,455"/><path d="M803,438 L800,565 L778,610 L790,620 L808,625 L812,657 L814,680"/><path d="M855,438 L845,520 L852,560 L860,580"/><path d="M845,525 L825,530 L820,570 L805,600"/><path d="M800,568 L818,578 L850,615"/><path d="M840,595 L925,532"/><path d="M855,545 L915,514"/><path d="M875,600 L948,570"/><path d="M1040,404 L1020,438"/><path d="M1140,452 L1172,472 L1152,490 L1155,498 L1196,535 L1215,555"/><path d="M1196,535 L1215,522"/><path d="M65,457 L190,438 L250,428"/><path d="M150,480 L252,462"/><path d="M188,505 L245,496"/><path d="M40,558 L205,532 L240,537"/><path d="M130,573 L200,562 L235,567"/><path d="M0,624 L200,590"/><path d="M15,677 L197,655"/><path d="M204,563 L197,657 L194,680 L184,787"/><path d="M168,540 L172,563"/><path d="M240,555 L285,560 L290,657 L285,680 L280,750 L250,791 L182,787 L0,814"/><path d="M260,558 L258,640 L252,702"/><path d="M292,626 L311,629"/><path d="M292,654 L321,658"/><path d="M877,384 L953,399"/><path d="M290,603 L335,594 L380,585"/><path d="M0,707 L192,677"/><path d="M0,747 L190,717"/><path d="M0,782 L185,750"/><path d="M0,844 L44,837 L41,810"/><path d="M10,657 L25,740"/><path d="M60,697 L77,800"/><path d="M100,692 L120,792"/><path d="M145,684 L156,753"/><path d="M164,753 L164,787"/><path d="M252,702 L250,732 L220,732"/><path d="M5,624 L10,657"/><path d="M662,779 L697,789"/><path d="M645,812 L690,822 L717,830"/><path d="M690,822 L702,782 L720,760 L737,755 L746,760"/><path d="M760,669 L882,736"/><path d="M781,681 L790,667 L810,660 L835,660 L845,670 L856,697 L849,716"/><path d="M805,704 L817,685 L826,688"/><path d="M640,845 L700,858 L750,865"/><path d="M321,489 L335,481 L347,466 L355,458 L380,450"/><path d="M368,586 L360,534 L361,512 L370,492"/><path d="M380,329 L395,340"/></g>
<g fill="none" stroke-linecap="round" stroke-linejoin="round" stroke="#dadcdb" stroke-width="5.8"><path d="M881,175 L882,192 L885,260 L884,300 L881,340 L878,346 L866,420 L860,438 L855,445"/><path d="M862,425 L875,438 L920,515 L950,570 L1005,657 L1110,830 L1140,875"/><path d="M744,355 L840,348 L880,345 L920,351 L945,369 L985,389 L1040,404 L1140,438 L1175,452"/><path d="M265,415 L260,438 L237,550 L228,657 L222,680 L212,787 L207,875"/><path d="M190,717 L220,720 L282,714 L328,716"/><path d="M668,382 L688,444 L692,456 L700,515 L703,541"/><path d="M646,408 L655,438 L685,540 L700,600 L720,650 L722,657 L715,694 L702,734 L680,757 L660,782 L645,807 L640,830 L636,875"/></g>
<g fill="none" stroke-linecap="round" stroke-linejoin="round" stroke="#dadcdb" stroke-width="7.8"><path d="M0,406 L150,377 L292,349 L380,329 L480,306 L590,280 L640,271 L654,271 L661,287 L668,320 L675,359"/><path d="M318,0 L318,195 L316,210 L300,290 L293,345 L300,420 L305,438 L325,550 L345,657 L343,700 L338,712"/><path d="M744,359 L696,360 L680,368 L668,382 L620,438 L530,528 L415,657 L380,699 L362,714 L342,721"/><path d="M332,724 L310,770 L270,830 L235,875"/><path d="M744,359 L758,398 L754,452 L748,515 L742,545 L741,627 L748,646 L753.6,666 L755,732 L750,875"/></g>
<g fill="none" stroke-linecap="round" stroke-linejoin="round" stroke="#fff" stroke-width="2.6"><path d="M545,286 L586,268 L643,242 L657,236 L679,216 L687,221 L720,220"/><path d="M636,200 L613,209 L602,217 L579,244 L584,269"/><path d="M615,231 L584,254"/><path d="M567,249 L572,273"/><path d="M523,138 L517.5,219 L517,280 L520,297"/><path d="M523,138 L537,138"/><path d="M632,146 L634,180 L637,200 L643,242"/><path d="M395,420 L397,385 L402,370 L420,360 L520,343 L560,350 L585,363 L620,382 L626,395"/><path d="M425,405 L440,391 L490,378 L530,375 L560,385 L568,400"/><path d="M602,325 L585,363 L565,405"/><path d="M565,405 L600,398 L656,391 L680,368"/><path d="M258,438 L262,400 L270,360"/><path d="M376,380 L398,405 L395,380"/><path d="M373,427 L365,446 L380,456 L421,487 L458,517 L487,545 L505,558"/><path d="M398,405 L417,405 L434,413 L456,427 L503,473 L545,510"/><path d="M398,405 L373,427"/><path d="M346,470 L370,492 L398,512"/><path d="M491,385 L499,413 L524,443"/><path d="M456,427 L472,416 L494,410"/><path d="M451,542 L454,569"/><path d="M455,438 L421,487 L397,520 L395,545 L403,580"/><path d="M565,405 L527,449 L503,473 L460,520 L430,540 L400,548"/><path d="M575,438 L527,494 L487,545"/><path d="M380,585 L440,570 L487,548"/><path d="M603,457 L625,485 L640,510 L648,545 L650,600 L640,615"/><path d="M527,540 L560,565 L580,568 L610,550 L648,545 L685,540 L740,545 L760,548 L800,548"/><path d="M555,560 L625,487"/><path d="M570,572 L570,600 L555,620 L560,640 L590,657 L600,665"/><path d="M570,595 L620,595 L648,605 L690,595"/><path d="M620,550 L625,595 L600,630 L585,657"/><path d="M560,610 L595,630 L615,645"/><path d="M648,605 L625,640 L615,657"/><path d="M690,455 L754,454"/><path d="M694,223 L699,279 L700,316 L699,354"/><path d="M750,192 L747,204 L733,210 L735,226 L739,279 L742,315"/><path d="M753.6,228 L757,278 L759,315"/><path d="M755,194 L760,200 L789,198 L790,217 L794,279 L795,318"/><path d="M830,220 L838,348"/><path d="M680,217 L688,222 L731,219"/><path d="M735,226 L789,218"/><path d="M760,200 L763,221"/><path d="M794,250 L880,246"/><path d="M661,263 L696,259"/><path d="M701,282 L793,278 L834,276"/><path d="M701,314 L742,314 L795,318"/><path d="M744,316 L746,351"/><path d="M736,250 L756,249"/><path d="M607,314 L662,308"/><path d="M750,192 L882,192"/><path d="M758,398 L808,404 L860,422 L900,434 L950,460 L1035,503 L1085,528 L1128,585"/><path d="M806,405 L800,515"/><path d="M752,492 L800,498"/><path d="M1115,438 L1035,503 L950,570 L870,625 L810,641 L780,651 L759,662 L755,668"/><path d="M807,622 L860,614 L880,600"/><path d="M724,653 L748,653"/><path d="M1060,519 L965,589"/><path d="M1083,529 L978,612"/><path d="M945,460 L920,510"/><path d="M940,480 L985,514 L970,535"/><path d="M930,495 L975,545"/><path d="M1020,438 L995,479"/><path d="M1010,455 L1040,468 L1052,455"/><path d="M803,438 L800,565 L778,610 L790,620 L808,625 L812,657 L814,680"/><path d="M855,438 L845,520 L852,560 L860,580"/><path d="M845,525 L825,530 L820,570 L805,600"/><path d="M800,568 L818,578 L850,615"/><path d="M840,595 L925,532"/><path d="M855,545 L915,514"/><path d="M875,600 L948,570"/><path d="M1040,404 L1020,438"/><path d="M1140,452 L1172,472 L1152,490 L1155,498 L1196,535 L1215,555"/><path d="M1196,535 L1215,522"/><path d="M65,457 L190,438 L250,428"/><path d="M150,480 L252,462"/><path d="M188,505 L245,496"/><path d="M40,558 L205,532 L240,537"/><path d="M130,573 L200,562 L235,567"/><path d="M0,624 L200,590"/><path d="M15,677 L197,655"/><path d="M204,563 L197,657 L194,680 L184,787"/><path d="M168,540 L172,563"/><path d="M240,555 L285,560 L290,657 L285,680 L280,750 L250,791 L182,787 L0,814"/><path d="M260,558 L258,640 L252,702"/><path d="M292,626 L311,629"/><path d="M292,654 L321,658"/><path d="M877,384 L953,399"/><path d="M290,603 L335,594 L380,585"/><path d="M0,707 L192,677"/><path d="M0,747 L190,717"/><path d="M0,782 L185,750"/><path d="M0,844 L44,837 L41,810"/><path d="M10,657 L25,740"/><path d="M60,697 L77,800"/><path d="M100,692 L120,792"/><path d="M145,684 L156,753"/><path d="M164,753 L164,787"/><path d="M252,702 L250,732 L220,732"/><path d="M5,624 L10,657"/><path d="M662,779 L697,789"/><path d="M645,812 L690,822 L717,830"/><path d="M690,822 L702,782 L720,760 L737,755 L746,760"/><path d="M760,669 L882,736"/><path d="M781,681 L790,667 L810,660 L835,660 L845,670 L856,697 L849,716"/><path d="M805,704 L817,685 L826,688"/><path d="M640,845 L700,858 L750,865"/><path d="M321,489 L335,481 L347,466 L355,458 L380,450"/><path d="M368,586 L360,534 L361,512 L370,492"/><path d="M380,329 L395,340"/></g>
<g fill="none" stroke-linecap="round" stroke-linejoin="round" stroke="#fff" stroke-width="3.8"><path d="M881,175 L882,192 L885,260 L884,300 L881,340 L878,346 L866,420 L860,438 L855,445"/><path d="M862,425 L875,438 L920,515 L950,570 L1005,657 L1110,830 L1140,875"/><path d="M744,355 L840,348 L880,345 L920,351 L945,369 L985,389 L1040,404 L1140,438 L1175,452"/><path d="M265,415 L260,438 L237,550 L228,657 L222,680 L212,787 L207,875"/><path d="M190,717 L220,720 L282,714 L328,716"/><path d="M668,382 L688,444 L692,456 L700,515 L703,541"/><path d="M646,408 L655,438 L685,540 L700,600 L720,650 L722,657 L715,694 L702,734 L680,757 L660,782 L645,807 L640,830 L636,875"/></g>
<g fill="none" stroke-linecap="round" stroke-linejoin="round" stroke="#fff" stroke-width="5.8"><path d="M0,406 L150,377 L292,349 L380,329 L480,306 L590,280 L640,271 L654,271 L661,287 L668,320 L675,359"/><path d="M318,0 L318,195 L316,210 L300,290 L293,345 L300,420 L305,438 L325,550 L345,657 L343,700 L338,712"/><path d="M744,359 L696,360 L680,368 L668,382 L620,438 L530,528 L415,657 L380,699 L362,714 L342,721"/><path d="M332,724 L310,770 L270,830 L235,875"/><path d="M744,359 L758,398 L754,452 L748,515 L742,545 L741,627 L748,646 L753.6,666 L755,732 L750,875"/></g>
<circle cx="336" cy="718" r="5" fill="none" stroke="#dadcdb" stroke-width="5"/><circle cx="336" cy="718" r="5" fill="none" stroke="#fff" stroke-width="3"/>
<g fill="none" stroke="#dcdedd" stroke-width="2.2"><path d="M316,0 L316,190 L317,223 L322,245 L329,264 L340,285 L353,303 L367,312 L381,318 L400,323 L430,324 L520,313 L555,311 L580,315 L605,324 L630,341 L650,364 L660,384 L667,438 L700,540 L725,657 L742,707 L748,757 L747,873"/></g>
<g fill="none" stroke="#f7f8f6" stroke-width="1.2" stroke-dasharray="5 4"><path d="M316,0 L316,190 L317,223 L322,245 L329,264 L340,285 L353,303 L367,312 L381,318 L400,323 L430,324 L520,313 L555,311 L580,315 L605,324 L630,341 L650,364 L660,384 L667,438 L700,540 L725,657 L742,707 L748,757 L747,873"/></g>
<path d="M660,400 L675,455 L700,545 L712,600" fill="none" stroke="#e3e5e4" stroke-width="8" stroke-dasharray="1 2"/>
<g font-family="Liberation Sans, sans-serif" text-anchor="middle" stroke-linejoin="round">
<text x="123" y="390" font-size="10.5" textLength="63" lengthAdjust="spacing" dominant-baseline="central" transform="rotate(-11.2 123 390)" fill="#fafaf8" stroke="#fafaf8" stroke-width="2.6" opacity=".9">Żarnowiecka</text><text x="123" y="390" font-size="10.5" textLength="63" lengthAdjust="spacing" dominant-baseline="central" transform="rotate(-11.2 123 390)" fill="#a7b3c0" stroke="#a7b3c0" stroke-width="0.15">Żarnowiecka</text>
<text x="531" y="297" font-size="10.5" textLength="100" lengthAdjust="spacing" dominant-baseline="central" transform="rotate(-13.8 531 297)" fill="#fafaf8" stroke="#fafaf8" stroke-width="2.6" opacity=".9">10 Lutego 10 Lutego</text><text x="531" y="297" font-size="10.5" textLength="100" lengthAdjust="spacing" dominant-baseline="central" transform="rotate(-13.8 531 297)" fill="#a7b3c0" stroke="#a7b3c0" stroke-width="0.15">10 Lutego 10 Lutego</text>
<text x="604" y="401.5" font-size="10.5" textLength="28" lengthAdjust="spacing" dominant-baseline="central" transform="rotate(-14 604 401.5)" fill="#fafaf8" stroke="#fafaf8" stroke-width="2.6" opacity=".9">Nowa</text><text x="604" y="401.5" font-size="10.5" textLength="28" lengthAdjust="spacing" dominant-baseline="central" transform="rotate(-14 604 401.5)" fill="#a7b3c0" stroke="#a7b3c0" stroke-width="0.15">Nowa</text>
<text x="679.5" y="418" font-size="10.5" textLength="52" lengthAdjust="spacing" dominant-baseline="central" transform="rotate(73 679.5 418)" fill="#fafaf8" stroke="#fafaf8" stroke-width="2.6" opacity=".9">Dworcowa</text><text x="679.5" y="418" font-size="10.5" textLength="52" lengthAdjust="spacing" dominant-baseline="central" transform="rotate(73 679.5 418)" fill="#a7b3c0" stroke="#a7b3c0" stroke-width="0.15">Dworcowa</text>
<text x="721" y="456.5" font-size="10.5" textLength="40" lengthAdjust="spacing" dominant-baseline="central" fill="#fafaf8" stroke="#fafaf8" stroke-width="2.6" opacity=".9">Wejhera</text><text x="721" y="456.5" font-size="10.5" textLength="40" lengthAdjust="spacing" dominant-baseline="central" fill="#a7b3c0" stroke="#a7b3c0" stroke-width="0.15">Wejhera</text>
<text x="748" y="496" font-size="10.5" textLength="85" lengthAdjust="spacing" dominant-baseline="central" transform="rotate(-84 748 496)" fill="#fafaf8" stroke="#fafaf8" stroke-width="2.6" opacity=".9">Wojska Polskiego</text><text x="748" y="496" font-size="10.5" textLength="85" lengthAdjust="spacing" dominant-baseline="central" transform="rotate(-84 748 496)" fill="#a7b3c0" stroke="#a7b3c0" stroke-width="0.15">Wojska Polskiego</text>
<text x="754" y="816" font-size="10.5" textLength="85" lengthAdjust="spacing" dominant-baseline="central" transform="rotate(-89 754 816)" fill="#fafaf8" stroke="#fafaf8" stroke-width="2.6" opacity=".9">Wojska Polskiego</text><text x="754" y="816" font-size="10.5" textLength="85" lengthAdjust="spacing" dominant-baseline="central" transform="rotate(-89 754 816)" fill="#a7b3c0" stroke="#a7b3c0" stroke-width="0.15">Wojska Polskiego</text>
<text x="876" y="350" font-size="10.5" textLength="75" lengthAdjust="spacing" dominant-baseline="central" transform="rotate(-80 876 350)" fill="#fafaf8" stroke="#fafaf8" stroke-width="2.6" opacity=".9">Lipowa Lipowa</text><text x="876" y="350" font-size="10.5" textLength="75" lengthAdjust="spacing" dominant-baseline="central" transform="rotate(-80 876 350)" fill="#a7b3c0" stroke="#a7b3c0" stroke-width="0.15">Lipowa Lipowa</text>
<text x="858" y="248" font-size="10.5" textLength="29" lengthAdjust="spacing" dominant-baseline="central" transform="rotate(-3 858 248)" fill="#fafaf8" stroke="#fafaf8" stroke-width="2.6" opacity=".9">1 Maja</text><text x="858" y="248" font-size="10.5" textLength="29" lengthAdjust="spacing" dominant-baseline="central" transform="rotate(-3 858 248)" fill="#a7b3c0" stroke="#a7b3c0" stroke-width="0.15">1 Maja</text>
<text x="484" y="456" font-size="10.5" textLength="35" lengthAdjust="spacing" dominant-baseline="central" transform="rotate(42 484 456)" fill="#fafaf8" stroke="#fafaf8" stroke-width="2.6" opacity=".9">Sychty</text><text x="484" y="456" font-size="10.5" textLength="35" lengthAdjust="spacing" dominant-baseline="central" transform="rotate(42 484 456)" fill="#a7b3c0" stroke="#a7b3c0" stroke-width="0.15">Sychty</text>
<text x="562" y="500" font-size="10.5" textLength="68" lengthAdjust="spacing" dominant-baseline="central" transform="rotate(-46 562 500)" fill="#fafaf8" stroke="#fafaf8" stroke-width="2.6" opacity=".9">Wejherowska</text><text x="562" y="500" font-size="10.5" textLength="68" lengthAdjust="spacing" dominant-baseline="central" transform="rotate(-46 562 500)" fill="#a7b3c0" stroke="#a7b3c0" stroke-width="0.15">Wejherowska</text>
<text x="499" y="568" font-size="10.5" textLength="68" lengthAdjust="spacing" dominant-baseline="central" transform="rotate(-45.6 499 568)" fill="#fafaf8" stroke="#fafaf8" stroke-width="2.6" opacity=".9">Wejherowska</text><text x="499" y="568" font-size="10.5" textLength="68" lengthAdjust="spacing" dominant-baseline="central" transform="rotate(-45.6 499 568)" fill="#a7b3c0" stroke="#a7b3c0" stroke-width="0.15">Wejherowska</text>
<text x="420" y="655" font-size="10.5" textLength="68" lengthAdjust="spacing" dominant-baseline="central" transform="rotate(-47 420 655)" fill="#fafaf8" stroke="#fafaf8" stroke-width="2.6" opacity=".9">Wejherowska</text><text x="420" y="655" font-size="10.5" textLength="68" lengthAdjust="spacing" dominant-baseline="central" transform="rotate(-47 420 655)" fill="#a7b3c0" stroke="#a7b3c0" stroke-width="0.15">Wejherowska</text>
<text x="706" y="607" font-size="10.5" textLength="100" lengthAdjust="spacing" dominant-baseline="central" transform="rotate(68 706 607)" fill="#fafaf8" stroke="#fafaf8" stroke-width="2.6" opacity=".9">Kolejowa Kolejowa</text><text x="706" y="607" font-size="10.5" textLength="100" lengthAdjust="spacing" dominant-baseline="central" transform="rotate(68 706 607)" fill="#a7b3c0" stroke="#a7b3c0" stroke-width="0.15">Kolejowa Kolejowa</text>
<text x="908" y="498" font-size="10.5" textLength="29" lengthAdjust="spacing" dominant-baseline="central" transform="rotate(57 908 498)" fill="#fafaf8" stroke="#fafaf8" stroke-width="2.6" opacity=".9">Polna</text><text x="908" y="498" font-size="10.5" textLength="29" lengthAdjust="spacing" dominant-baseline="central" transform="rotate(57 908 498)" fill="#a7b3c0" stroke="#a7b3c0" stroke-width="0.15">Polna</text>
<text x="1030" y="701" font-size="10.5" textLength="38" lengthAdjust="spacing" dominant-baseline="central" transform="rotate(54.6 1030 701)" fill="#fafaf8" stroke="#fafaf8" stroke-width="2.6" opacity=".9">Morska</text><text x="1030" y="701" font-size="10.5" textLength="38" lengthAdjust="spacing" dominant-baseline="central" transform="rotate(54.6 1030 701)" fill="#a7b3c0" stroke="#a7b3c0" stroke-width="0.15">Morska</text>
<text x="1139" y="873" font-size="10.5" textLength="38" lengthAdjust="spacing" dominant-baseline="central" transform="rotate(54.6 1139 873)" fill="#fafaf8" stroke="#fafaf8" stroke-width="2.6" opacity=".9">Morska</text><text x="1139" y="873" font-size="10.5" textLength="38" lengthAdjust="spacing" dominant-baseline="central" transform="rotate(54.6 1139 873)" fill="#a7b3c0" stroke="#a7b3c0" stroke-width="0.15">Morska</text>
<text x="251" y="489" font-size="10.5" textLength="60" lengthAdjust="spacing" dominant-baseline="central" transform="rotate(-77 251 489)" fill="#fafaf8" stroke="#fafaf8" stroke-width="2.6" opacity=".9">Swarzewska</text><text x="251" y="489" font-size="10.5" textLength="60" lengthAdjust="spacing" dominant-baseline="central" transform="rotate(-77 251 489)" fill="#a7b3c0" stroke="#a7b3c0" stroke-width="0.15">Swarzewska</text>
<text x="311" y="467" font-size="10.5" textLength="38" lengthAdjust="spacing" dominant-baseline="central" transform="rotate(75 311 467)" fill="#fafaf8" stroke="#fafaf8" stroke-width="2.6" opacity=".9">Helska</text><text x="311" y="467" font-size="10.5" textLength="38" lengthAdjust="spacing" dominant-baseline="central" transform="rotate(75 311 467)" fill="#a7b3c0" stroke="#a7b3c0" stroke-width="0.15">Helska</text>
<text x="342" y="655" font-size="10.5" textLength="38" lengthAdjust="spacing" dominant-baseline="central" transform="rotate(82 342 655)" fill="#fafaf8" stroke="#fafaf8" stroke-width="2.6" opacity=".9">Helska</text><text x="342" y="655" font-size="10.5" textLength="38" lengthAdjust="spacing" dominant-baseline="central" transform="rotate(82 342 655)" fill="#a7b3c0" stroke="#a7b3c0" stroke-width="0.15">Helska</text>
<text x="250" y="710" font-size="10.5" textLength="47" lengthAdjust="spacing" dominant-baseline="central" transform="rotate(7 250 710)" fill="#fafaf8" stroke="#fafaf8" stroke-width="2.6" opacity=".9">Topolowa</text><text x="250" y="710" font-size="10.5" textLength="47" lengthAdjust="spacing" dominant-baseline="central" transform="rotate(7 250 710)" fill="#a7b3c0" stroke="#a7b3c0" stroke-width="0.15">Topolowa</text>
<text font-size="10.5" fill="#fafaf8" stroke="#fafaf8" stroke-width="2.6" opacity=".9" dominant-baseline="central" text-anchor="start" textLength="92" lengthAdjust="spacing"><textPath href="#eo" startOffset="4">Elizy Orzeszkowej</textPath></text>
<text font-size="10.5" fill="#a7b3c0" stroke="#a7b3c0" stroke-width=".15" dominant-baseline="central" text-anchor="start" textLength="92" lengthAdjust="spacing"><textPath href="#eo" startOffset="4">Elizy Orzeszkowej</textPath></text>
<text x="747.5" y="263" font-size="17" textLength="41" lengthAdjust="spacing" dominant-baseline="central" fill="#fafaf8" stroke="#fafaf8" stroke-width="2.6" opacity=".9">Puck</text><text x="747.5" y="263" font-size="17" textLength="41" lengthAdjust="spacing" dominant-baseline="central" fill="#8797a7" stroke="#8797a7" stroke-width="0.45">Puck</text>
<text x="804" y="337" font-size="10.5" textLength="66" lengthAdjust="spacing" dominant-baseline="central" fill="#fafaf8" stroke="#fafaf8" stroke-width="2.6" opacity=".9">PUCKI PLAC</text><text x="804" y="337" font-size="10.5" textLength="66" lengthAdjust="spacing" dominant-baseline="central" fill="#8797a7" stroke="#8797a7" stroke-width="0.45">PUCKI PLAC</text>
<text x="468" y="437" font-size="10.5" textLength="46" lengthAdjust="spacing" dominant-baseline="central" fill="#fafaf8" stroke="#fafaf8" stroke-width="2.6" opacity=".9">DZIAŁKI</text><text x="468" y="437" font-size="10.5" textLength="46" lengthAdjust="spacing" dominant-baseline="central" fill="#8797a7" stroke="#8797a7" stroke-width="0.45">DZIAŁKI</text>
<text x="1203" y="520" font-size="11" textLength="61" lengthAdjust="spacing" dominant-baseline="central" fill="#fafaf8" stroke="#fafaf8" stroke-width="2.6" opacity=".9">ROZGARD</text><text x="1203" y="520" font-size="11" textLength="61" lengthAdjust="spacing" dominant-baseline="central" fill="#8797a7" stroke="#8797a7" stroke-width="0.45">ROZGARD</text>
<text x="244" y="638" font-size="11" textLength="51" lengthAdjust="spacing" dominant-baseline="central" fill="#fafaf8" stroke="#fafaf8" stroke-width="2.6" opacity=".9">OSIEDLE</text><text x="244" y="638" font-size="11" textLength="51" lengthAdjust="spacing" dominant-baseline="central" fill="#8797a7" stroke="#8797a7" stroke-width="0.45">OSIEDLE</text>
<text x="244" y="652.5" font-size="11" textLength="93" lengthAdjust="spacing" dominant-baseline="central" fill="#fafaf8" stroke="#fafaf8" stroke-width="2.6" opacity=".9">SWARZEWSKIE</text><text x="244" y="652.5" font-size="11" textLength="93" lengthAdjust="spacing" dominant-baseline="central" fill="#8797a7" stroke="#8797a7" stroke-width="0.45">SWARZEWSKIE</text>
</g>
<circle cx="697" cy="318" r="64" fill="url(#hy)"/>
<circle cx="249" cy="712" r="68" fill="url(#hy)"/>
<circle cx="952" cy="441" r="84" fill="url(#hg)"/>
<circle cx="684" cy="664" r="84" fill="url(#hg)"/>
<circle cx="695" cy="325" r="9" fill="#bfe36b" stroke="#a3c653" stroke-width="1"/>
<circle cx="249" cy="699" r="9" fill="#bfe36b" stroke="#a3c653" stroke-width="1"/>
<circle cx="950" cy="443" r="9" fill="#57d682" stroke="#2f9a57" stroke-width="1"/>
<circle cx="684" cy="662" r="9" fill="#57d682" stroke="#2f9a57" stroke-width="1"/>
</svg>
</div>
<div class="arr" style="left:128.6px"><svg width="22" height="22" viewBox="-1 -1 22 22"><path d="M12.3,4.2 L6.3,9.6 L12.3,15" fill="none" stroke="#f0f4f1" stroke-width="3"/></svg></div>
<div class="tabs"><div class="tab on"><span>PM10</span></div><div class="tab"><span>PM2.5</span></div><div class="tab"><span>CAQI</span></div><div class="tab"><span>NO<sub>2</sub></span></div><div class="tab"><span>SO<sub>2</sub></span></div><div class="tab"><span>O<sub>3</sub></span></div><div class="tab"><span>C<sub>6</sub>H<sub>6</sub></span></div><div class="tab"><span>Hałas</span></div></div>
<div class="arr" style="left:1373.7px"><svg width="22" height="22" viewBox="-1 -1 22 22"><path d="M7.2,4.1 L13.6,9.5 L7.8,15.3" fill="none" stroke="#d6dcde" stroke-width="3"/></svg></div>
<div class="side l"><svg width="53" height="63" viewBox="0 0 53 63"><path d="M29.3,23.6 L18.5,32 L28.8,40.5" fill="none" stroke="#fff" stroke-width="1.6"/></svg></div>
<div class="side r"><svg width="53" height="63" viewBox="0 0 53 63"><path d="M28.7,23.6 L18.9,32 L28.5,40.5" fill="none" stroke="#fff" stroke-width="1.6"/></svg></div>
<div class="sel"><b>Aktualne dane</b><i></i></div>
<div class="zoom"><div><svg width="30" height="30"><path d="M9.5,15 H20.5 M15,9.5 V20.5" stroke="#000" stroke-width="2.2"/></svg></div><div><svg width="30" height="30"><path d="M9.5,15 H20.5" stroke="#000" stroke-width="2.2"/></svg></div></div>
<div class="legend"><div style="background:#57d682;color:#fff;-webkit-text-stroke:.3px #fff"><span>Bardzo dobry</span></div><div style="background:#bfe36b;color:#555;-webkit-text-stroke:0"><span>Dobry</span></div><div style="background:#fde74c;color:#555;-webkit-text-stroke:0"><span>Umiarkowany</span></div><div style="background:#fd8a52;color:#fff;-webkit-text-stroke:.3px #fff"><span>Dostateczny</span></div><div style="background:#e93c3e;color:#fff;-webkit-text-stroke:.3px #fff"><span>Zły</span></div><div style="background:#ab0000;color:#fff;-webkit-text-stroke:.3px #fff"><span>Bardzo zły</span></div></div>
</body></html>
